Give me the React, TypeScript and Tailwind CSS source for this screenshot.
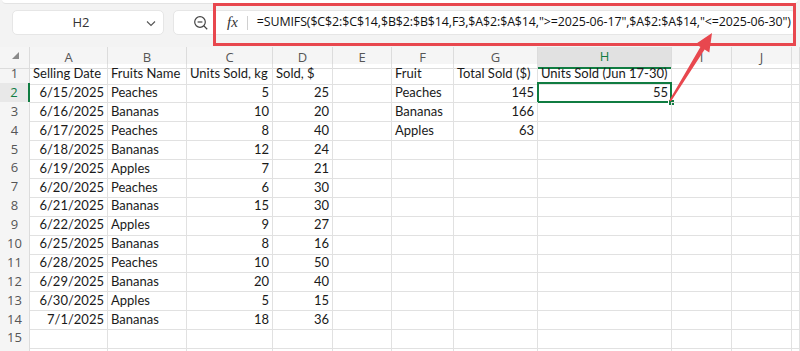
import React from "react";

const cols = ["A", "B", "C", "D", "E", "F", "G", "H", "I", "J", ""];

type Cell = { t: string; r?: boolean };
const L = (t: string): Cell => ({ t });
const R = (t: string): Cell => ({ t, r: true });
const E: Cell = { t: "" };
const EMPTY: Cell[] = [E, E, E, E, E, E, E, E, E, E, E];

const data: Cell[][] = [
  [L("Selling Date"), L("Fruits Name"), L("Units Sold, kg"), L("Sold, $"), E, L("Fruit"), L("Total Sold ($)"), L("Units Sold (Jun 17-30)"), E, E, E],
  [R("6/15/2025"), L("Peaches"), R("5"), R("25"), E, L("Peaches"), R("145"), R("55"), E, E, E],
  [R("6/16/2025"), L("Bananas"), R("10"), R("20"), E, L("Bananas"), R("166"), E, E, E, E],
  [R("6/17/2025"), L("Peaches"), R("8"), R("40"), E, L("Apples"), R("63"), E, E, E, E],
  [R("6/18/2025"), L("Bananas"), R("12"), R("24"), E, E, E, E, E, E, E],
  [R("6/19/2025"), L("Apples"), R("7"), R("21"), E, E, E, E, E, E, E],
  [R("6/20/2025"), L("Peaches"), R("6"), R("30"), E, E, E, E, E, E, E],
  [R("6/21/2025"), L("Bananas"), R("15"), R("30"), E, E, E, E, E, E, E],
  [R("6/22/2025"), L("Apples"), R("9"), R("27"), E, E, E, E, E, E, E],
  [R("6/25/2025"), L("Bananas"), R("8"), R("16"), E, E, E, E, E, E, E],
  [R("6/28/2025"), L("Peaches"), R("10"), R("50"), E, E, E, E, E, E, E],
  [R("6/29/2025"), L("Bananas"), R("20"), R("40"), E, E, E, E, E, E, E],
  [R("6/30/2025"), L("Apples"), R("5"), R("15"), E, E, E, E, E, E, E],
  [R("7/1/2025"), L("Bananas"), R("18"), R("36"), E, E, E, E, E, E, E],
  EMPTY,
  EMPTY,
];

const gridCols = "grid grid-cols-[30px_78px_79px_86px_60px_59px_62px_84px_134px_60px_60px_1fr]";

export default function App() {
  return (
    <div className="relative w-[800px] h-[351px] overflow-hidden bg-[#f3f3f3] font-['Lato',sans-serif] text-[#1a1a1a]">
      {/* top strip */}
      <div className="mx-[2px] h-[4px] bg-white rounded-b-[10px] border-b border-[#e3e3e3]" />
      {/* formula bar */}
      <div className="flex items-start gap-[9px] pl-[12px] pr-[4px] h-[43px] pt-[6px]">
        <div className="w-[152px] h-[25px] bg-white rounded-[5px] border border-[#e6e6e6] flex items-center relative">
          <span className="flex-1 text-center text-[13px] text-[#333] font-['Open_Sans',sans-serif] pr-[18px] pl-[4px]">H2</span>
          <svg className="absolute right-[7px] top-[9px]" width="10" height="7" viewBox="0 0 10 7">
            <path d="M1 1.5 L5 5.5 L9 1.5" fill="none" stroke="#555" strokeWidth="1.1" />
          </svg>
        </div>
        <div className="flex-1 h-[25px] bg-white rounded-[5px] border border-[#e6e6e6] flex items-center">
          <svg className="ml-[19px]" width="16" height="16" viewBox="0 0 16 16">
            <circle cx="7" cy="7" r="5.3" fill="none" stroke="#444" strokeWidth="1.2" />
            <path d="M4.6 7 H9.4" stroke="#444" strokeWidth="1.2" />
            <path d="M10.9 10.9 L14.2 14.2" stroke="#444" strokeWidth="1.3" />
          </svg>
          <span className="ml-[18px] text-[15px] italic text-[#333] font-['Liberation_Serif',serif]">fx</span>
          <div className="ml-[9px] w-px h-[14px] bg-[#d0d0d0]" />
          <span className="ml-[9px] text-[12.4px] text-[#111] font-['Open_Sans',sans-serif] whitespace-nowrap tracking-[-0.1px]">
            =SUMIFS($C$2:$C$14,$B$2:$B$14,F3,$A$2:$A$14,"&gt;=2025-06-17",$A$2:$A$14,"&lt;=2025-06-30")
          </span>
        </div>
      </div>
      {/* sheet */}
      <div className="bg-white">
        {/* column headers */}
        <div className={`${gridCols} h-[17px] bg-[#f5f5f5]`}>
          <div className="relative border-r border-b border-[#dcdcdc]">
            <svg className="absolute left-[12px] top-[5px]" width="7" height="7" viewBox="0 0 7 7">
              <path d="M7 0 L7 7 L0 7 Z" fill="#8a8a8a" />
            </svg>
          </div>
          {cols.map((c, i) =>
            c === "H" ? (
              <div key={i} className="flex items-center justify-center text-[13px] text-[#107c41] bg-[#e1e1e1] border-r border-[#dcdcdc] border-b-2 border-b-[#107c41] font-['Open_Sans',sans-serif]">
                {c}
              </div>
            ) : (
              <div key={i} className="flex items-center justify-center text-[13px] text-[#555] border-r border-b border-[#dcdcdc] font-['Open_Sans',sans-serif]">
                {c}
              </div>
            )
          )}
        </div>
        {data.map((row, ri) => (
          <div key={ri} className={`${gridCols} h-[18.9px]`}>
            <div
              className={
                ri === 1
                  ? "flex items-center justify-center text-[13px] text-[#107c41] bg-[#e8e8e8] border-r-2 border-r-[#107c41] border-b border-[#dcdcdc] font-['Open_Sans',sans-serif]"
                  : "flex items-center justify-center text-[13px] text-[#555] bg-[#f5f5f5] border-r border-b border-[#dcdcdc] font-['Open_Sans',sans-serif]"
              }
            >
              {ri < 15 ? ri + 1 : ""}
            </div>
            {row.map((c, ci) => {
              const sel = ri === 1 && ci === 7;
              return (
                <div
                  key={ci}
                  className={`relative flex items-center whitespace-nowrap overflow-visible text-[13px] leading-none px-[3px] border-r border-b border-[#e1e1e1] ${
                    c.r ? "justify-end" : "justify-start"
                  }`}
                >
                  {c.t}
                  {sel && (
                    <>
                      <div className="absolute -left-px -top-px -right-px -bottom-px border-2 border-[#107c41]" />
                      <div className="absolute -right-[4px] -bottom-[4px] w-[7px] h-[7px] bg-[#107c41] border border-white" />
                    </>
                  )}
                </div>
              );
            })}
          </div>
        ))}
      </div>
      {/* red highlight box */}
      <div className="absolute left-[213px] top-[3px] w-[583px] h-[43px] border-[3px] border-[#e8474e] pointer-events-none" />
      {/* arrow */}
      <svg className="absolute left-0 top-0 pointer-events-none" width="800" height="351" viewBox="0 0 800 351">
        <polygon
          points="669.2,100.5 700.4,47.0 695.7,44.1 712,33 709.3,52.5 704.6,49.6 670.9,101.5"
          fill="#e8474e"
        />
      </svg>
    </div>
  );
}
